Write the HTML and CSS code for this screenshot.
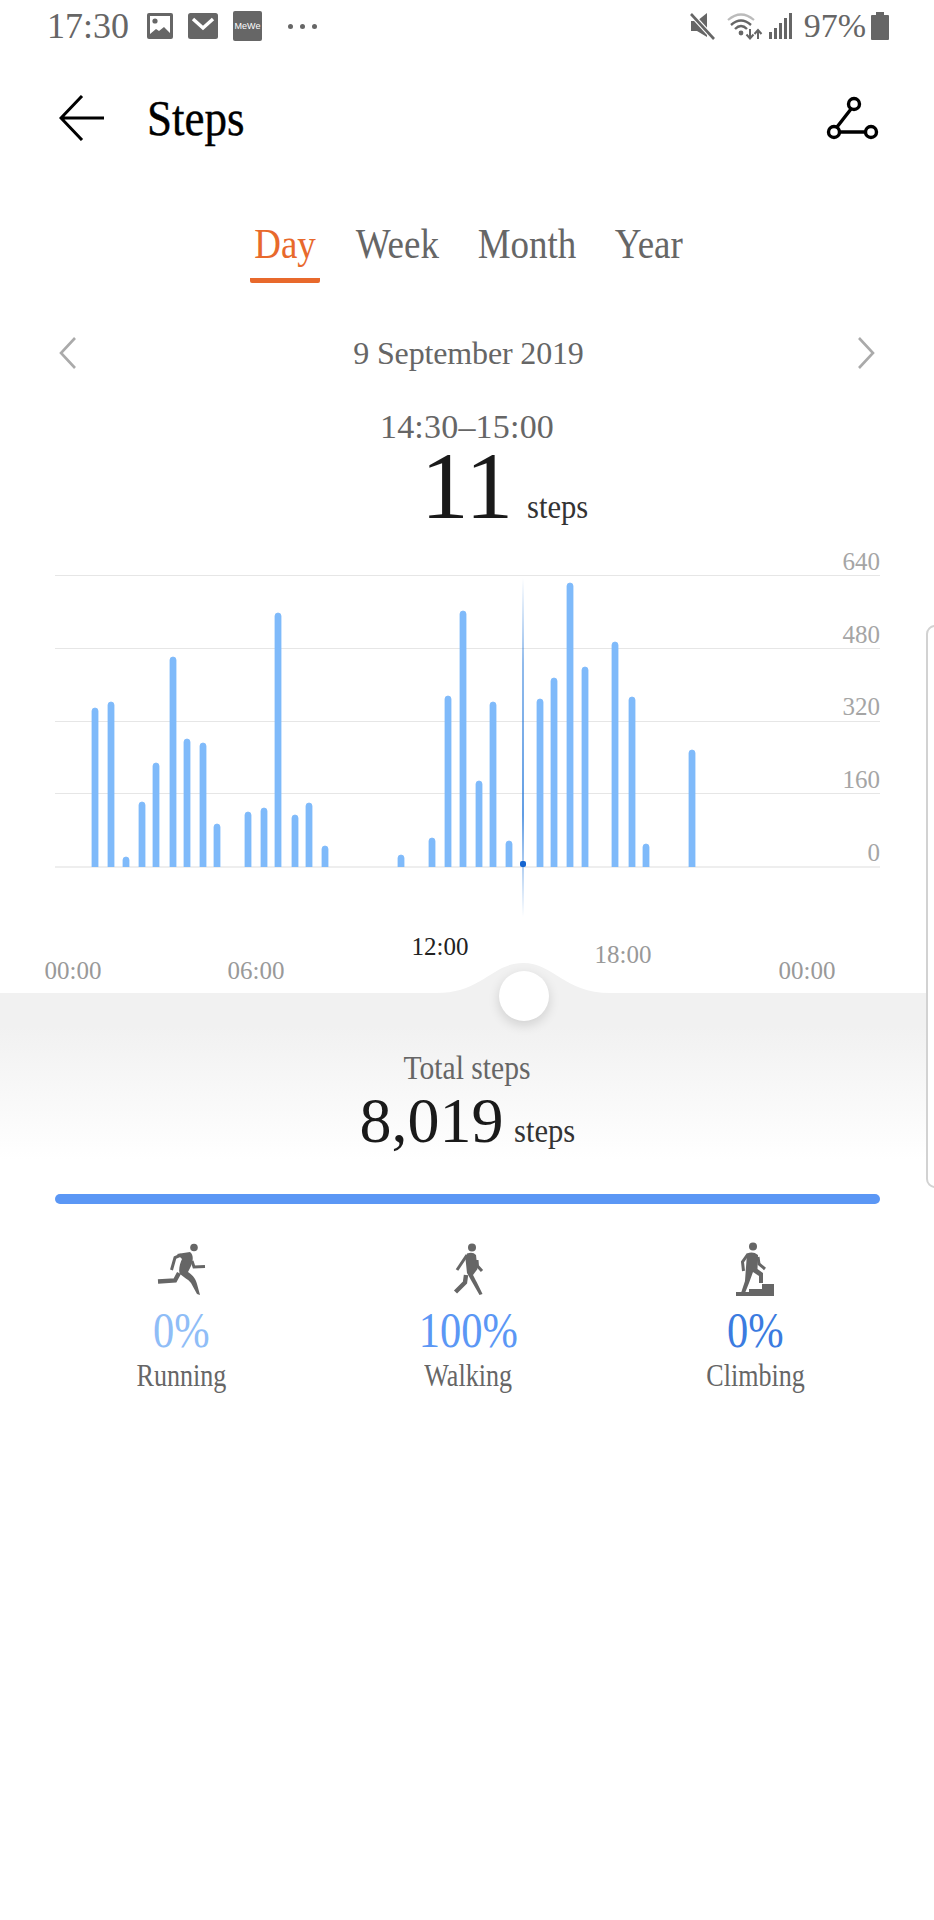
FILE: index.html
```html
<!DOCTYPE html>
<html lang="en">
<head>
    <meta charset="UTF-8">
    <meta name="viewport" content="width=device-width, initial-scale=1.0">
    <title>Steps</title>
    <link rel="stylesheet" href="styles.css">
</head>
<body>
    <!-- Status bar -->
    <div class="status-bar">
        <div class="status-left">
            <span class="status-time">17:30</span>
            <svg class="status-icon" width="26" height="26" viewBox="0 0 26 26">
                <rect width="26" height="26" rx="2" fill="#666"/>
                <path d="M3 3h20v17l-6-6-5 4-3-2-6 5z" fill="#fff"/>
                <circle cx="8" cy="8" r="2.6" fill="#666"/>
            </svg>
            <svg class="status-icon" width="30" height="26" viewBox="0 0 30 26">
                <rect width="30" height="26" rx="2.5" fill="#666"/>
                <path d="M5 6l10 9 10-9" fill="none" stroke="#fff" stroke-width="3.4"/>
            </svg>
            <div class="mewe-icon">MeWe</div>
            <div class="status-dots"><i></i><i></i><i></i></div>
        </div>
        <div class="status-right">
            <svg class="mute" width="26" height="28" viewBox="0 0 26 28">
                <path d="M1 9h6l10-8v24l-10-6H1z" fill="#666"/>
                <path d="M2 3l22 24" stroke="#fff" stroke-width="5"/>
                <path d="M1 2l23 25" stroke="#666" stroke-width="2.6"/>
            </svg>
            <svg class="wifi" width="36" height="28" viewBox="0 0 36 28">
                <path d="M1 8Q14-3 27 8" fill="none" stroke="#bbb" stroke-width="2.2"/>
                <path d="M4 13Q14 4 24 13" fill="none" stroke="#666" stroke-width="2.4"/>
                <path d="M8 17Q14 11 20 17" fill="none" stroke="#666" stroke-width="2.4"/>
                <circle cx="14" cy="21" r="2.4" fill="#666"/>
                <path d="M23 17v9M19.500 22.500l3.500 4 3.500-4M31 27v-8M27.500 22l3.500-4 3.500 4" fill="none" stroke="#666" stroke-width="2"/>
            </svg>
            <svg class="signal" width="24" height="26" viewBox="0 0 24 26">
                <path d="M0 19h3v7H0zM5 15h3v11H5zM10 10h3v16h-3zM15 5h3v21h-3zM20 0h3v26h-3z" fill="#666"/>
            </svg>
            <span class="status-battery">97%</span>
            <svg width="18" height="28" viewBox="0 0 18 28">
                <path d="M5 0h8v3h4a1 1 0 0 1 1 1v23a1 1 0 0 1-1 1H1a1 1 0 0 1-1-1V4a1 1 0 0 1 1-1h4z" fill="#666"/>
            </svg>
        </div>
    </div>

    <!-- Title bar -->
    <header class="title-bar">
        <svg class="back-icon" width="46" height="46" viewBox="0 0 46 46">
            <path d="M23 1L2 23l21 22M2 23h43" fill="none" stroke="#000" stroke-width="3"/>
        </svg>
        <h1 class="title">Steps</h1>
        <svg class="route-icon" width="54" height="46" viewBox="0 0 54 46">
            <path d="M25 14L11 32M13 37h27" stroke="#000" stroke-width="3.4"/>
            <circle cx="28" cy="9" r="5.500" fill="none" stroke="#000" stroke-width="3.4"/>
            <circle cx="8" cy="37" r="5.500" fill="none" stroke="#000" stroke-width="3.4"/>
            <circle cx="45" cy="37" r="5.500" fill="none" stroke="#000" stroke-width="3.4"/>
        </svg>
    </header>

    <nav class="tabs">
        <a class="tab active"><span>Day</span></a>
        <a class="tab"><span>Week</span></a>
        <a class="tab"><span>Month</span></a>
        <a class="tab"><span>Year</span></a>
    </nav>

    <div class="date-row">
        <svg width="18" height="32" viewBox="0 0 18 32"><path d="M16 1L2 16l14 15" fill="none" stroke="#aaa" stroke-width="2.6"/></svg>
        <span class="date">9 September 2019</span>
        <svg width="18" height="32" viewBox="0 0 18 32"><path d="M2 1l14 15L2 31" fill="none" stroke="#aaa" stroke-width="2.6"/></svg>
    </div>

    <div class="range">14:30–15:00</div>
    <div class="count"><span class="count-num">11</span><span class="count-unit">steps</span></div>

    <!-- Chart: a free canvas, coordinates are page pixels -->
    <svg class="chart" width="934" height="453" viewBox="0 540 934 453">
        <defs>
            <linearGradient id="cursor" x1="0" y1="0" x2="0" y2="1">
                <stop offset="0" stop-color="#1f74d8" stop-opacity="0"/>
                <stop offset="0.25" stop-color="#1f74d8" stop-opacity="0.7"/>
                <stop offset="0.7" stop-color="#1f74d8"/>
                <stop offset="1" stop-color="#1f74d8" stop-opacity="0"/>
            </linearGradient>
            <clipPath id="plot"><rect x="55" y="560" width="825" height="307"/></clipPath>
        </defs>

        <path class="grid" d="M55 575.500H880M55 648.500H880M55 721.500H880M55 793.500H880"/>
        <path class="grid-base" d="M55 867H880"/>

        <g class="bars" clip-path="url(#plot)">
            <rect x="92" y="708" width="6" height="165" rx="3"/>
            <rect x="108" y="702" width="6" height="171" rx="3"/>
            <rect x="123" y="857" width="6" height="16" rx="3"/>
            <rect x="139" y="802" width="6" height="71" rx="3"/>
            <rect x="153" y="763" width="6" height="110" rx="3"/>
            <rect x="170" y="657" width="6" height="216" rx="3"/>
            <rect x="184" y="739" width="6" height="134" rx="3"/>
            <rect x="200" y="743" width="6" height="130" rx="3"/>
            <rect x="214" y="824" width="6" height="49" rx="3"/>
            <rect x="245" y="812" width="6" height="61" rx="3"/>
            <rect x="261" y="808" width="6" height="65" rx="3"/>
            <rect x="275" y="613" width="6" height="260" rx="3"/>
            <rect x="292" y="815" width="6" height="58" rx="3"/>
            <rect x="306" y="803" width="6" height="70" rx="3"/>
            <rect x="322" y="846" width="6" height="27" rx="3"/>
            <rect x="398" y="855" width="6" height="18" rx="3"/>
            <rect x="429" y="838" width="6" height="35" rx="3"/>
            <rect x="445" y="696" width="6" height="177" rx="3"/>
            <rect x="460" y="611" width="6" height="262" rx="3"/>
            <rect x="476" y="781" width="6" height="92" rx="3"/>
            <rect x="490" y="702" width="6" height="171" rx="3"/>
            <rect x="506" y="841" width="6" height="32" rx="3"/>
            <rect x="537" y="699" width="6" height="174" rx="3"/>
            <rect x="551" y="678" width="6" height="195" rx="3"/>
            <rect x="567" y="583" width="6" height="290" rx="3"/>
            <rect x="582" y="667" width="6" height="206" rx="3"/>
            <rect x="612" y="642" width="6" height="231" rx="3"/>
            <rect x="629" y="697" width="6" height="176" rx="3"/>
            <rect x="643" y="844" width="6" height="29" rx="3"/>
            <rect x="689" y="750" width="6" height="123" rx="3"/>
        </g>

        <rect x="522.300" y="578" width="1.400" height="339" fill="url(#cursor)"/>
        <rect x="520" y="861" width="6" height="6" rx="2" fill="#1565d0"/>

        <text class="y-label" x="880" y="570">640</text>
        <text class="y-label" x="880" y="643">480</text>
        <text class="y-label" x="880" y="715">320</text>
        <text class="y-label" x="880" y="788">160</text>
        <text class="y-label" x="880" y="861">0</text>

        <text class="x-label" x="73" y="979">00:00</text>
        <text class="x-label" x="256" y="979">06:00</text>
        <text class="x-label now" x="440" y="955">12:00</text>
        <text class="x-label" x="623" y="963">18:00</text>
        <text class="x-label" x="807" y="979">00:00</text>

        <path class="hump" d="M436 993C482 993 492 963 523 963S564 993 610 993Z"/>
    </svg>

    <section class="panel">
        <div class="knob"></div>
        <div class="total-label">Total steps</div>
        <div class="total"><span class="total-num">8,019</span><span class="count-unit">steps</span></div>
    </section>

    <div class="progress"></div>

    <div class="stats">
        <div class="stat">
            <svg class="stat-icon" width="70" height="70" viewBox="0 0 70 70">
                <circle cx="47" cy="10.500" r="3.800"/>
                <path d="M30 17L43 15C47 18 46 24 44 29L41 35C47 39 49 43 50 47L53 58 50 57 44 46C41 42 36 40 33 37 31 34 33 26 35 22Z"/>
                <path class="limb" d="M34 18L28 20.500 24.500 33M45 24L47 30 58 29.500"/>
                <path class="limb thick" d="M32 36L28 43.500 11 44.500"/>
            </svg>
            <div class="stat-value light">0%</div>
            <div class="stat-name">Running</div>
        </div>
        <div class="stat">
            <svg class="stat-icon" width="70" height="70" viewBox="0 0 70 70">
                <circle cx="38" cy="10.500" r="4"/>
                <path d="M33 16.500Q39 14.500 42 18L43.500 32 39 38C41 42 44 47 48.500 57L45.500 58 37.500 44 33 36 31.500 22Z"/>
                <path class="limb" d="M33 18L23 33M43 23L43.500 29 48 34"/>
                <path class="limb thick" d="M32 38L31 45.500 21.500 55"/>
            </svg>
            <div class="stat-value mid">100%</div>
            <div class="stat-name">Walking</div>
        </div>
        <div class="stat">
            <svg class="stat-icon" width="70" height="70" viewBox="0 0 70 70">
                <circle cx="32" cy="9.500" r="4"/>
                <path d="M26 16.500Q32 14 37 18L36.500 32 42 36V46H38V39L32 35 28 46 24 56H20L24 44 25 30Z"/>
                <path class="limb" d="M27 17L21.500 25 22.500 34M37 20L38 27 44 32"/>
                <path d="M15 59V55H28V52H41V47H53V59Z"/>
            </svg>
            <div class="stat-value strong">0%</div>
            <div class="stat-name">Climbing</div>
        </div>
    </div>

    <div class="edge-handle"></div>
</body>
</html>
```

FILE: styles.css
```css
body {
    position: relative;
    width: 934px;
    height: 1920px;
    margin: 0;
    overflow: hidden;
    background-color: #fff;
    font-family: "Liberation Serif", serif;
    color: #666;
}

/* status bar */
.status-bar {
    display: flex;
    justify-content: space-between;
    align-items: center;
    height: 52px;
    padding: 0 45px 0 47px;
}
.status-left,
.status-right {
    display: flex;
    align-items: center;
}
.status-time {
    font-size: 36px;
    margin-right: 18px;
}
.status-icon {
    margin-right: 15px;
}
.mewe-icon {
    width: 29px;
    height: 30px;
    margin-right: 26px;
    border-radius: 2px;
    background-color: #666;
    color: #fff;
    font-family: "Liberation Sans", sans-serif;
    font-size: 9px;
    line-height: 30px;
    text-align: center;
}
.status-dots {
    display: flex;
    gap: 7px;
}
.status-dots i {
    width: 5px;
    height: 5px;
    border-radius: 50%;
    background-color: #666;
}
.status-right .mute {
    margin-right: 11px;
}
.status-right .wifi {
    margin-right: 6px;
}
.status-right .signal {
    margin-right: 11px;
}
.status-battery {
    font-size: 34px;
    margin-right: 5px;
}

/* title */
.title-bar {
    display: flex;
    align-items: center;
    height: 132px;
    padding: 0 54px 0 59px;
}
.title {
    flex: 1;
    margin: 0 0 0 42px;
    font-size: 50px;
    font-weight: normal;
    color: #000;
    -webkit-text-stroke: 0.4px #000;
    transform: scaleX(0.9);
    transform-origin: left;
}

/* tabs */
.tabs {
    display: flex;
    justify-content: center;
    gap: 27px;
    margin-top: 37px;
    padding-left: 3px;
}
.tab {
    padding-bottom: 11px;
    border-bottom: 5px solid transparent;
    font-size: 42px;
    line-height: 46px;
}
.tab span {
    display: inline-block;
    transform: scaleX(0.88);
}
.tab.active {
    margin-right: 3px;
    border-radius: 0 0 2px 2px;
    border-bottom-color: #e8692c;
    color: #e8692c;
}

.date-row {
    display: flex;
    justify-content: space-between;
    align-items: center;
    height: 60px;
    margin-top: 40px;
    padding: 0 59px;
}
.date {
    margin-left: 3px;
    font-size: 32px;
    letter-spacing: -0.15px;
}

.range {
    margin-top: 24px;
    font-size: 34px;
    line-height: 40px;
    letter-spacing: 0.2px;
    text-align: center;
}
.count {
    display: grid;
    grid-template-columns: 1fr auto 1fr;
    align-items: baseline;
    height: 81px;
    margin-top: -1px;
    color: #1a1a1a;
}
.count-num {
    grid-column: 2;
    font-size: 96px;
    line-height: 80px;
}
.count-unit {
    margin-left: 14px;
    font-size: 34px;
    color: #333;
    transform: scaleX(0.9);
    transform-origin: left;
}

/* chart */
.chart {
    display: block;
    margin-top: 13px;
}
.grid {
    fill: none;
    stroke: #e6e6e6;
    stroke-width: 1;
}
.grid-base {
    fill: none;
    stroke: #eee;
    stroke-width: 2;
}
.bars rect {
    fill: #7fbafa;
    stroke: #7fbafa;
    stroke-width: 0.8;
}
.y-label {
    fill: #a5a5a5;
    font-size: 25px;
    text-anchor: end;
}
.x-label {
    fill: #999;
    font-size: 25px;
    text-anchor: middle;
}
.x-label.now {
    fill: #222;
}
.hump {
    fill: #f1f1f1;
}

/* lower panel */
.panel {
    position: relative;
    height: 112px;
    padding-top: 55px;
    background: linear-gradient(#f1f1f1 20%, #fff 100%);
}
.knob {
    position: absolute;
    left: 499px;
    top: -22px;
    width: 50px;
    height: 50px;
    border-radius: 50%;
    background-color: #fff;
    box-shadow: 0 4px 12px rgba(0, 0, 0, 0.14);
}
.total-label {
    font-size: 34px;
    line-height: 40px;
    text-align: center;
    transform: scaleX(0.87);
}
.total {
    display: flex;
    justify-content: center;
    align-items: baseline;
    margin-top: 3px;
    color: #1a1a1a;
}
.total-num {
    font-size: 64px;
    line-height: 60px;
}
.total .count-unit {
    margin: 0 -7px 0 10px;
}

.progress {
    height: 10px;
    margin: 34px 54px 0 55px;
    border-radius: 5px;
    background-color: #5b97f5;
}

/* activity split */
.stats {
    display: grid;
    grid-template-columns: repeat(3, 287px);
    justify-content: center;
    margin-top: 33px;
    padding-left: 3px;
}
.stat {
    display: flex;
    flex-direction: column;
    align-items: center;
}
.stat-icon {
    fill: #666;
}
.limb {
    fill: none;
    stroke: #666;
    stroke-width: 3;
}
.limb.thick {
    stroke-width: 4.4;
}
.stat-value {
    margin-top: -2px;
    font-size: 50px;
    line-height: 50px;
    transform: scaleX(0.85);
}
.stat-value.light {
    color: #8fbdf7;
}
.stat-value.mid {
    color: #5b97f5;
}
.stat-value.strong {
    color: #3b7be0;
}
.stat-name {
    margin-top: 1px;
    font-size: 31px;
    line-height: 40px;
    transform: scaleX(0.84);
}

/* samsung edge panel handle */
.edge-handle {
    position: absolute;
    top: 625px;
    right: -10px;
    width: 14px;
    height: 559px;
    border: 2px solid #d2d2d2;
    border-radius: 14px;
    background-color: #fff;
}
```
